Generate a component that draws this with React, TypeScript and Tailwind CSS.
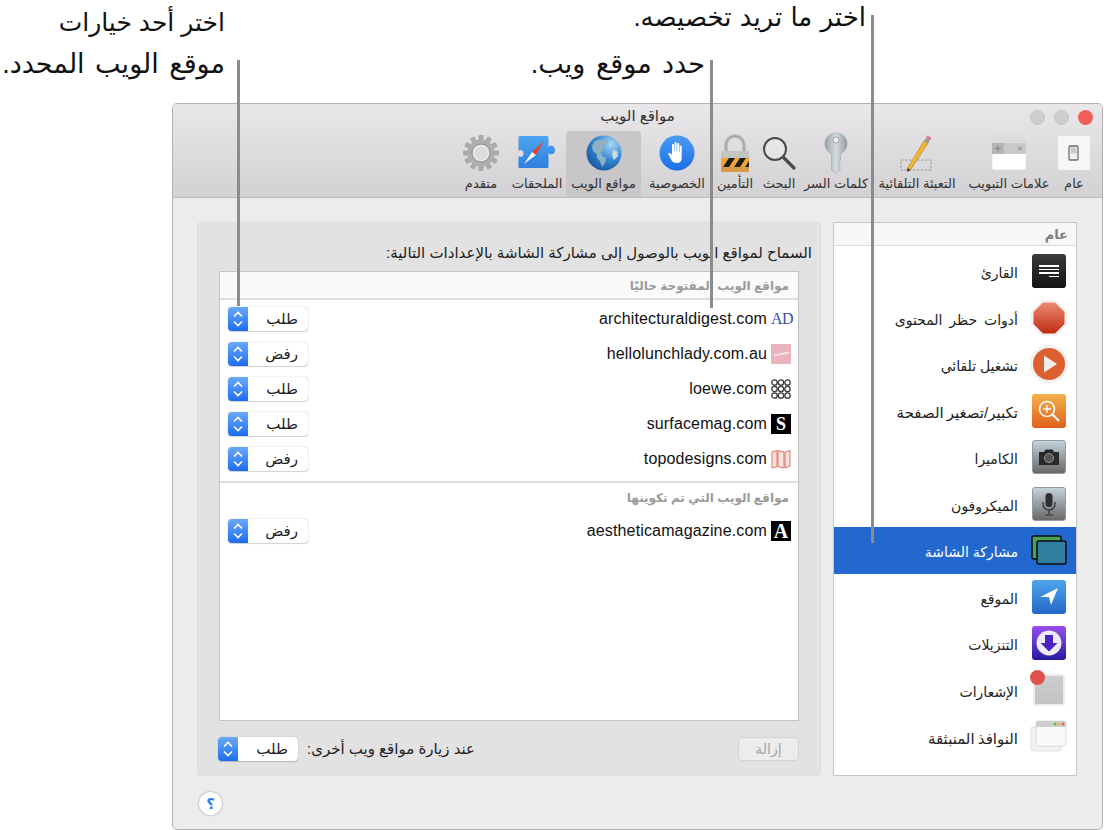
import React from 'react';

const tools = [
  { label: 'عام', w: 'w-[34px]', icon: 'general' },
  { label: 'علامات التبويب', w: 'w-[96px]', icon: 'tabs' },
  { label: 'التعبئة التلقائية', w: 'w-[88px]', icon: 'autofill' },
  { label: 'كلمات السر', w: 'w-[74px]', icon: 'key' },
  { label: 'البحث', w: 'w-[40px]', icon: 'search' },
  { label: 'التأمين', w: 'w-[48px]', icon: 'lock' },
  { label: 'الخصوصية', w: 'w-[68px]', icon: 'hand' },
  { label: 'مواقع الويب', w: 'w-[75px]', icon: 'globe' },
  { label: 'الملحقات', w: 'w-[58px]', icon: 'ext' },
  { label: 'متقدم', w: 'w-[54px]', icon: 'gear' },
];

const sideItems = [
  { label: 'القارئ', icon: 'reader', size: 'text-[14px]' },
  { label: 'أدوات حظر المحتوى', icon: 'stop', size: 'text-[14px] [word-spacing:3px]' },
  { label: 'تشغيل تلقائي', icon: 'play', size: 'text-[14px]' },
  { label: 'تكبير/تصغير الصفحة', icon: 'zoom', size: 'text-[15px] [word-spacing:-1px]' },
  { label: 'الكاميرا', icon: 'camera', size: 'text-[14px]' },
  { label: 'الميكروفون', icon: 'mic', size: 'text-[14px]' },
  { label: 'مشاركة الشاشة', icon: 'screen', size: 'text-[14px]', active: true },
  { label: 'الموقع', icon: 'location', size: 'text-[14px]' },
  { label: 'التنزيلات', icon: 'download', size: 'text-[14px]' },
  { label: 'الإشعارات', icon: 'notify', size: 'text-[14px]' },
  { label: 'النوافذ المنبثقة', icon: 'popup', size: 'text-[15px] [word-spacing:-1px]' },
];

function ToolIcon({ name }: { name: string }) {
  switch (name) {
    case 'general':
      return (
        <svg width="34" height="36" viewBox="0 0 34 36">
          <rect x="1" y="1" width="32" height="34" fill="#f6f6f6" />
          <rect x="12" y="11" width="9" height="14" rx="1" fill="#f2f2f2" stroke="#6e6e6e" strokeWidth="1.3" />
          <rect x="13.5" y="12.5" width="6" height="6" fill="#c9c9c9" />
        </svg>
      );
    case 'tabs':
      return (
        <svg width="34" height="36" viewBox="0 0 34 36">
          <path d="M0 3a2 2 0 0 1 2-2h30a2 2 0 0 1 2 2v30a2 2 0 0 1-2 2H2a2 2 0 0 1-2-2z" fill="#fff" stroke="#d2d2d2" strokeWidth="0.5" />
          <path d="M0 3a2 2 0 0 1 2-2h30a2 2 0 0 1 2 2v5H0z" fill="#dcdcdc" />
          <rect x="0" y="8" width="34" height="11" fill="#c9c9c9" />
          <rect x="0" y="8" width="12" height="11" fill="#b6b6b6" />
          <path d="M3 13.500h6M6 10.500v6M26 11.500l4 4M30 11.500l-4 4" stroke="#777" strokeWidth="0.8" />
        </svg>
      );
    case 'autofill':
      return (
        <svg width="34" height="38" viewBox="0 0 34 38">
          <rect x="1" y="26" width="30" height="10" fill="none" stroke="#8c8c8c" strokeWidth="0.8" strokeDasharray="2.500 1.500" />
          <path d="M7.500 34 L24 7 L28 9.500 L10.500 36z" fill="#f1b534" stroke="#a77718" strokeWidth="0.5" />
          <path d="M24 7 L26 3.800 L30 6.300 L28 9.500z" fill="#9a9a9a" />
          <path d="M26 3.800 L27.500 1.500 L31.500 4 L30 6.300z" fill="#e5708b" />
          <path d="M7.500 34 L7 38 L10.500 36z" fill="#333" />
        </svg>
      );
    case 'key':
      return (
        <svg width="26" height="42" viewBox="0 0 26 42">
          <defs>
            <linearGradient id="keyG" x1="0" x2="1" y1="0" y2="0">
              <stop offset="0" stopColor="#98a2a5" />
              <stop offset="0.5" stopColor="#d6dcde" />
              <stop offset="1" stopColor="#929c9f" />
            </linearGradient>
          </defs>
          <path d="M13 1C6 1 2 6 2 12c0 5 3 8 6.500 10V38l4 3 5-4-2-2.500 2-2-2-2.500 2-2v-6.500C21 20 24 17 24 12 24 6 20 1 13 1z" fill="url(#keyG)" stroke="#9aa3a6" strokeWidth="0.6" />
          <circle cx="13" cy="8" r="3" fill="#eceef0" stroke="#7d8689" strokeWidth="0.6" />
        </svg>
      );
    case 'search':
      return (
        <svg width="36" height="36" viewBox="0 0 36 36">
          <circle cx="14" cy="14" r="11" fill="#f2f2f2" fillOpacity="0.4" stroke="#4a4a4a" strokeWidth="2" />
          <path d="M22.500 22.500 L33 33" stroke="#4a4a4a" strokeWidth="3.200" strokeLinecap="round" />
        </svg>
      );
    case 'lock':
      return (
        <svg width="30" height="40" viewBox="0 0 30 40">
          <path d="M6 19V12a9 9 0 0 1 18 0v7" fill="none" stroke="#b9b9b9" strokeWidth="3.500" />
          <path d="M6 19V12a9 9 0 0 1 18 0v7" fill="none" stroke="#8e8e8e" strokeWidth="0.6" />
          <rect x="1" y="18" width="28" height="21" rx="1.500" fill="#d89a48" />
          <rect x="1" y="18" width="28" height="7" fill="#c4c4c4" />
          <rect x="1" y="25" width="28" height="9" fill="#f0a531" />
          <path d="M3 34 L9 25 H15 L9 34z M14 34 L20 25 H26 L20 34z M25 34 L29 28 V34z" fill="#1d1d1d" />
        </svg>
      );
    case 'hand':
      return (
        <svg width="36" height="36" viewBox="0 0 36 36">
          <defs>
            <linearGradient id="handG" x1="0" x2="0" y1="0" y2="1">
              <stop offset="0" stopColor="#4a9cf2" />
              <stop offset="1" stopColor="#1c6fe8" />
            </linearGradient>
          </defs>
          <circle cx="18" cy="18" r="17.500" fill="url(#handG)" />
          <path d="M13 26 L9.500 19.500c-.8-1.600 1-2.500 2-1.200L13 20V10c0-1.500 2-1.500 2 0v6h.5V8c0-1.500 2.200-1.500 2.200 0v8h.5V9c0-1.500 2.100-1.500 2.100 0v8h.4v-5.500c0-1.500 2-1.500 2 0V23c0 3-1.700 5-4.700 5-2.500 0-4-.7-5-2z" fill="#fff" />
        </svg>
      );
    case 'globe':
      return (
        <svg width="36" height="36" viewBox="0 0 36 36">
          <defs>
            <radialGradient id="globeG" cx="0.7" cy="0.25" r="0.9">
              <stop offset="0" stopColor="#a8d6f4" />
              <stop offset="0.5" stopColor="#3486d2" />
              <stop offset="1" stopColor="#124c94" />
            </radialGradient>
          </defs>
          <circle cx="18" cy="18" r="17.500" fill="url(#globeG)" />
          <path d="M8 7c4-3 10-3 14-1l-1 4-4 1 1 3-3 3 1 4 4 2-1 5-3 4-2-6-3-3 0-4-4-3-1-5z" fill="#8fb0c4" />
          <path d="M27 15l4 1 1 5-4 4-2-4z" fill="#c9dbe4" />
        </svg>
      );
    case 'ext':
      return (
        <svg width="40" height="36" viewBox="0 0 40 36">
          <defs>
            <linearGradient id="extG" x1="0" x2="0" y1="0" y2="1">
              <stop offset="0" stopColor="#4ba6f0" />
              <stop offset="1" stopColor="#2f7fe0" />
            </linearGradient>
          </defs>
          <path d="M3 1h27a1.500 1.500 0 0 1 1.500 1.500V12c2-2.500 6.500-1.500 6.500 3s-4.500 5.500-6.500 3v13.500A1.500 1.500 0 0 1 30 33H3a1.500 1.500 0 0 1-1.500-1.500V21c2.500 2 5 .5 5-2.500S4 14 1.500 16V2.500A1.500 1.500 0 0 1 3 1z" fill="url(#extG)" />
          <path d="M27 6 L15 17 L19 20z" fill="#e8402f" />
          <path d="M7 29 L15 17 L19 20z" fill="#f4f4f4" />
        </svg>
      );
    case 'gear':
      return (
        <svg width="38" height="38" viewBox="0 0 38 38">
          <g fill="#a9abab">
            {[0, 30, 60, 90, 120, 150, 180, 210, 240, 270, 300, 330].map((a) => (
              <rect key={a} x="16.500" y="1" width="5" height="8" rx="1" transform={`rotate(${a} 19 19)`} />
            ))}
          </g>
          <circle cx="19" cy="19" r="13.500" fill="#adafaf" />
          <circle cx="19" cy="19" r="9" fill="#e8e6e8" stroke="#8c8e8e" strokeWidth="1" />
          <circle cx="19" cy="19" r="6.500" fill="#dddbdd" />
        </svg>
      );
    default:
      return null;
  }
}

function SideIcon({ name }: { name: string }) {
  switch (name) {
    case 'reader':
      return (
        <div className="w-[34px] h-[34px] rounded-[3px] bg-gradient-to-b from-[#3c3c3c] to-[#141414] flex flex-col items-center justify-center gap-[2px]">
          <div className="w-[20px] h-[1.5px] bg-white" />
          <div className="w-[20px] h-[1.5px] bg-white" />
          <div className="w-[20px] h-[1.5px] bg-white" />
          <div className="w-[10px] h-[1.5px] bg-white self-start mr-[7px]" />
        </div>
      );
    case 'stop':
      return (
        <svg width="36" height="36" viewBox="0 0 36 36">
          <defs>
            <linearGradient id="stopG" x1="0" x2="0" y1="0" y2="1">
              <stop offset="0" stopColor="#ef8a70" />
              <stop offset="1" stopColor="#bd2c12" />
            </linearGradient>
          </defs>
          <path d="M11 0h14l11 11v14L25 36H11L0 25V11z" fill="#f4f0ef" />
          <path d="M12 2.500h12L33.500 12v12L24 33.500H12L2.500 24V12z" fill="url(#stopG)" />
        </svg>
      );
    case 'play':
      return (
        <svg width="38" height="38" viewBox="0 0 38 38">
          <circle cx="19" cy="19" r="18.500" fill="#f5f2f1" stroke="#dedede" strokeWidth="0.5" />
          <circle cx="19" cy="19" r="16" fill="#dc5f30" />
          <path d="M14 10.500 L27 19 L14 27.500z" fill="#f3ece8" />
        </svg>
      );
    case 'zoom':
      return (
        <div className="w-[34px] h-[34px] rounded-[3px] bg-gradient-to-b from-[#f3b14c] to-[#df5f1b] flex items-center justify-center">
          <svg width="24" height="24" viewBox="0 0 24 24" fill="none" stroke="#fff" strokeWidth="1.600">
            <circle cx="10" cy="10" r="7.500" />
            <path d="M15.500 15.500 L22 22" strokeWidth="2" />
            <path d="M6 10h8M10 6v8" />
          </svg>
        </div>
      );
    case 'camera':
      return (
        <div className="w-[34px] h-[34px] rounded-[3px] border border-[#8f9aa3] bg-gradient-to-b from-[#c5d3dc] to-[#6a6a6a] flex items-center justify-center">
          <svg width="22" height="18" viewBox="0 0 22 18">
            <path d="M1 4h5l1.500-2.500h7L16 4h5v13H1z" fill="#2a2a2a" />
            <circle cx="11" cy="10" r="4.500" fill="#555" stroke="#999" strokeWidth="1" />
          </svg>
        </div>
      );
    case 'mic':
      return (
        <div className="w-[34px] h-[34px] rounded-[3px] border border-[#8f9aa3] bg-gradient-to-b from-[#c5d3dc] to-[#6a6a6a] flex items-center justify-center">
          <svg width="14" height="24" viewBox="0 0 14 24">
            <rect x="3.500" y="1" width="7" height="14" rx="3.500" fill="#2f2f2f" />
            <path d="M1 10v2a6 6 0 0 0 12 0v-2M7 18v4M3 23h8" fill="none" stroke="#2f2f2f" strokeWidth="1.200" />
          </svg>
        </div>
      );
    case 'screen':
      return (
        <svg width="36" height="30" viewBox="0 0 36 30">
          <rect x="1" y="1" width="29" height="23" rx="2" fill="#4aa259" stroke="#0d0d0d" strokeWidth="1.500" />
          <rect x="6" y="6" width="29" height="23" rx="2" fill="#2f7ea0" stroke="#0d0d0d" strokeWidth="1.500" />
        </svg>
      );
    case 'location':
      return (
        <div className="w-[34px] h-[34px] rounded-[3px] bg-gradient-to-b from-[#4fa5ec] to-[#2468c8] flex items-center justify-center">
          <svg width="20" height="20" viewBox="0 0 20 20">
            <path d="M1 10 L19 1 L12 18 L10 10z" fill="#fff" />
          </svg>
        </div>
      );
    case 'download':
      return (
        <div className="w-[34px] h-[34px] rounded-[3px] bg-gradient-to-b from-[#9a4df0] to-[#2417a0] flex items-center justify-center">
          <svg width="26" height="26" viewBox="0 0 26 26">
            <circle cx="13" cy="13" r="12.500" fill="#ecebf5" />
            <path d="M9 5h8v8h4.500L13 21.500 4.500 13H9z" fill="#4a22c4" />
          </svg>
        </div>
      );
    case 'notify':
      return (
        <div className="relative w-[32px] h-[32px] rounded-[2px] border-2 border-[#ececec] bg-gradient-to-b from-[#cdcdcf] to-[#c2c2c4]">
          <div className="absolute -left-[5px] -top-[6px] w-[15px] h-[15px] rounded-full bg-[#e2524c]" />
        </div>
      );
    case 'popup':
      return (
        <svg width="37" height="32" viewBox="0 0 37 32">
          <rect x="1" y="7" width="30" height="24" rx="1.500" fill="#f1f1f1" stroke="#d6d6d6" strokeWidth="0.7" />
          <rect x="6" y="1" width="30" height="25" rx="2" fill="#fafafa" stroke="#cfcfcf" strokeWidth="0.7" />
          <path d="M6 3a2 2 0 0 1 2-2h26a2 2 0 0 1 2 2v4H6z" fill="#cfcfcf" />
          <circle cx="25" cy="4" r="1.500" fill="#62bd5a" />
          <circle cx="29" cy="4" r="1.500" fill="#efb84a" />
          <circle cx="33" cy="4" r="1.500" fill="#e4685f" />
        </svg>
      );
    default:
      return null;
  }
}

function Favicon({ name }: { name: string }) {
  switch (name) {
    case 'ad':
      return <span className="w-[20px] text-center text-[16px] leading-none tracking-[-0.5px] text-[#3a4bb8] font-['Liberation_Serif',serif]" dir="ltr">AD</span>;
    case 'lady':
      return <div className="w-[20px] h-[20px] bg-[#eab3bd] flex items-center justify-center"><div className="w-[15px] h-[2px] bg-white/60 -rotate-12" /></div>;
    case 'loewe':
      return (
        <svg width="20" height="20" viewBox="0 0 20 20" fill="none" stroke="#3a3a3a" strokeWidth="1.300">
          {[3.500, 10, 16.500].map((y) =>
            [3.500, 10, 16.500].map((x) => <circle key={`${x}-${y}`} cx={x} cy={y} r="2.700" />),
          )}
        </svg>
      );
    case 'surface':
      return <div className="w-[20px] h-[20px] bg-black text-white text-[18px] font-bold leading-[20px] text-center font-['Liberation_Serif',serif]" dir="ltr">S</div>;
    case 'topo':
      return (
        <svg width="20" height="20" viewBox="0 0 20 20" fill="#fbe4e0" stroke="#e0705f" strokeWidth="1">
          <path d="M1 3l5-1.500v16L1 19zM7 1.500l6 1.500v16l-6-1.500zM14 3l5-1.500V17l-5 2z" />
        </svg>
      );
    case 'aes':
      return <div className="w-[20px] h-[20px] bg-black text-white text-[20px] font-bold leading-[21px] text-center font-['Liberation_Serif',serif]" dir="ltr">A</div>;
    default:
      return null;
  }
}

function PopUp({ value }: { value: string }) {
  return (
    <div className="w-[80px] h-[24px] flex bg-white rounded-[4px] shadow-[0_0_1px_rgba(0,0,0,0.45),0_1px_1px_rgba(0,0,0,0.15)] overflow-hidden shrink-0">
      <div className="flex-1 pr-[10px] text-[15px] leading-[24px] text-[#222]">{value}</div>
      <div className="w-[20px] bg-gradient-to-b from-[#6aa9f8] to-[#1a6cf0] flex items-center justify-center">
        <svg width="12" height="18" viewBox="0 0 12 18" fill="none" stroke="#fff" strokeWidth="1.600">
          <path d="M2 6.500 L6 2.500 L10 6.500M2 11.500 L6 15.500 L10 11.500" />
        </svg>
      </div>
    </div>
  );
}

function SiteRow({ site, fav, value }: { site: string; fav: string; value: string }) {
  return (
    <div className="h-[34.8px] flex items-center pr-[7px] pl-[8px]">
      <div className="w-[20px] flex justify-center shrink-0"><Favicon name={fav} /></div>
      <div className="flex-1 pr-[4px] text-[16px] tracking-[0.15px] text-[#111] text-right" dir="rtl">
        <bdi dir="ltr">{site}</bdi>
      </div>
      <PopUp value={value} />
    </div>
  );
}

export default function App() {
  return (
    <div dir="rtl" className="relative w-[1104px] h-[830px] bg-white overflow-hidden pt-[103px] pr-[1px] pl-[172px] font-['Liberation_Sans','DejaVu_Sans',sans-serif]">
      {/* window */}
      <div className="h-[727px] rounded-[5px] border border-[#b3b3b3] bg-[#ececec] overflow-hidden">
        <div className="relative h-[94px] bg-gradient-to-b from-[#e9e7e9] to-[#d3d1d3] border-b border-[#bdbdbd] flex items-end pr-[11px]">
          <div className="absolute top-[2px] left-0 right-0 text-center text-[15px] text-[#333] leading-[20px]">مواقع الويب</div>
          <div className="absolute top-[6px] right-[9px] flex gap-[9px]">
            <div className="w-[15px] h-[15px] rounded-full bg-[#ee5f55]" />
            <div className="w-[15px] h-[15px] rounded-full bg-[#cfcdcf] border border-[#c4c2c4]" />
            <div className="w-[15px] h-[15px] rounded-full bg-[#cfcdcf] border border-[#c4c2c4]" />
          </div>
          {tools.map((t) => (
            <div key={t.label} className={`${t.w} shrink-0 h-[66px] flex flex-col items-center justify-end whitespace-nowrap ${t.icon === 'globe' ? 'bg-[#c8c6c8] rounded-t-[4px] mr-[2px]' : ''}`}>
              <div className="h-[44px] flex items-center justify-center"><ToolIcon name={t.icon} /></div>
              <div className="h-[22px] text-[13px] leading-[18px] text-[#333]">{t.label}</div>
            </div>
          ))}
        </div>

        <div className="flex px-[25px] pt-[24px] gap-[12px]">
          {/* sidebar */}
          <div className="w-[244px] h-[554px] shrink-0 bg-white border border-[#c6c6c6]">
            <div className="h-[23px] bg-[#f7f7f7] border-b border-[#dcdcdc] pr-[8px] pt-[1px] text-[13px] font-bold leading-[22px] text-[#7d7d7d]">عام</div>
            <div className="pt-[2px]">
              {sideItems.map((s) => (
                <div key={s.label} className={`h-[46.5px] flex items-center ${s.active ? 'bg-[#2268cf] text-white' : 'text-[#222]'}`}>
                  <div className="w-[48px] pr-[7px] flex justify-center shrink-0"><SideIcon name={s.icon} /></div>
                  <div className={`pr-[10px] pt-[5px] whitespace-nowrap ${s.size}`}>{s.label}</div>
                </div>
              ))}
            </div>
          </div>

          {/* main panel */}
          <div className="w-[624px] h-[554px] shrink-0 rounded-[4px] bg-[#e2e2e2] border border-[#dddddd] px-[21px] pt-[20px]">
            <div className="h-[28px] text-[15px] leading-[20px] text-[#222] -mr-[13px] whitespace-nowrap">السماح لمواقع الويب بالوصول إلى مشاركة الشاشة بالإعدادات التالية:</div>
            <div className="w-[580px] h-[450px] bg-white border border-[#c3c3c3]">
              <div className="h-[28px] border-b-2 border-[#dedede] bg-[#fafafa] pr-[9px] text-[12px] font-bold leading-[28px] text-[#9a9a9a]">مواقع الويب المفتوحة حاليًا</div>
              <div className="pt-[2px] h-[183px] border-b-2 border-[#dedede]">
                <SiteRow site="architecturaldigest.com" fav="ad" value="طلب" />
                <SiteRow site="hellolunchlady.com.au" fav="lady" value="رفض" />
                <SiteRow site="loewe.com" fav="loewe" value="طلب" />
                <SiteRow site="surfacemag.com" fav="surface" value="طلب" />
                <SiteRow site="topodesigns.com" fav="topo" value="رفض" />
              </div>
              <div className="h-[31px] pr-[9px] text-[12px] font-bold leading-[30px] text-[#9a9a9a]">مواقع الويب التي تم تكوينها</div>
              <SiteRow site="aestheticamagazine.com" fav="aes" value="رفض" />
            </div>
            <div className="flex items-center h-[24px] mt-[16px] -ml-[1px]">
              <div className="w-[61px] h-[24px] rounded-[4px] bg-[#ececec] border border-[#d2d2d2] text-center text-[14px] leading-[22px] text-[#a5a5a5]">إزالة</div>
              <div className="flex-1" />
              <span className="text-[15px] text-[#222] ml-[9px] whitespace-nowrap">عند زيارة مواقع ويب أخرى:</span>
              <PopUp value="طلب" />
            </div>
          </div>
        </div>

        <div className="flex justify-end pl-[26px] pt-[16px]">
          <div className="w-[23px] h-[23px] rounded-full bg-white shadow-[0_0_2px_rgba(0,0,0,0.45)] text-center text-[15px] font-bold leading-[23px] text-[#2b7cf0]">؟</div>
        </div>
      </div>

      {/* callouts */}
      <div className="absolute top-[2px] right-[879px] text-[25px] leading-[40px] text-[#111] whitespace-nowrap">اختر أحد خيارات</div>
      <div className="absolute top-[44px] right-[879px] text-[27px] leading-[40px] text-[#111] whitespace-nowrap [word-spacing:3px]">موقع الويب المحدد.</div>
      <div className="absolute top-[44px] right-[399px] text-[27px] leading-[40px] text-[#111] whitespace-nowrap [word-spacing:3px]">حدد موقع ويب.</div>
      <div className="absolute top-[-3px] right-[238px] text-[26px] leading-[40px] text-[#111] whitespace-nowrap [word-spacing:1px]">اختر ما تريد تخصيصه.</div>
      <div className="absolute left-[237px] top-[60px] w-[3px] h-[246px] bg-[#8c8c8c]" />
      <div className="absolute left-[710px] top-[60px] w-[3px] h-[248px] bg-[#8c8c8c]" />
      <div className="absolute left-[871px] top-[15px] w-[3px] h-[528px] bg-[#8c8c8c]" />
    </div>
  );
}
